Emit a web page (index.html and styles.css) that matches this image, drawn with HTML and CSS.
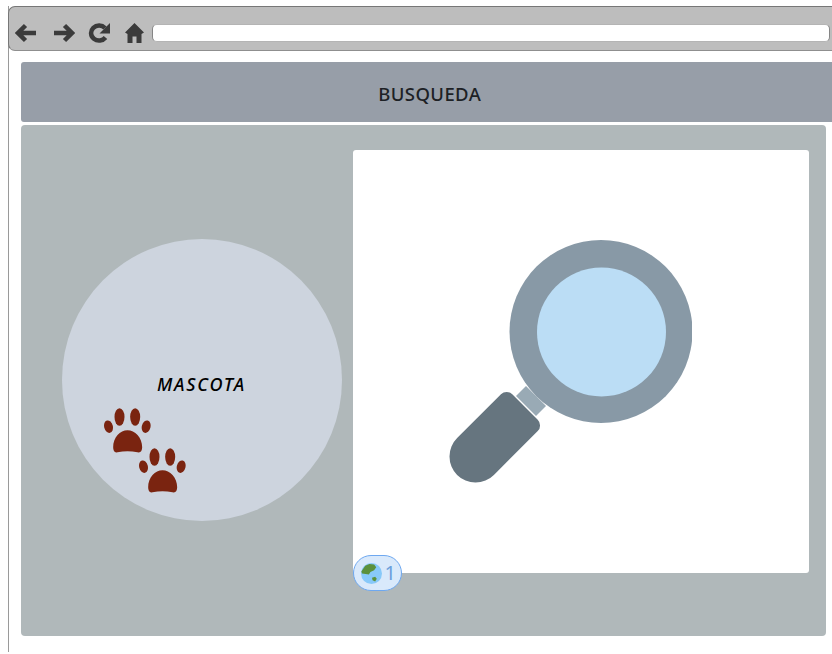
FILE: index.html
```html
<!DOCTYPE html>
<html lang="es">
<head>
<meta charset="utf-8">
<title>Busqueda</title>
<link rel="stylesheet" href="styles.css">
</head>
<body>
<svg class="defs" width="0" height="0" aria-hidden="true">
  <symbol id="paw" viewBox="0 0 140 135">
    <ellipse cx="46" cy="27" rx="15" ry="26"/>
    <ellipse cx="93" cy="27" rx="15" ry="26"/>
    <ellipse cx="13" cy="56" rx="13" ry="19" transform="rotate(-14 13 56)"/>
    <ellipse cx="126" cy="56" rx="13" ry="19" transform="rotate(14 126 56)"/>
    <path d="M27 118C27 88 48 67 70 67C92 67 114 88 114 118Q114 136 100 133Q70 127 40 133Q27 136 27 118Z"/>
  </symbol>
</svg>
<div class="window">
  <div class="toolbar">
    <div class="nav">
      <svg class="icon back" viewBox="0 0 21 20"><path d="M10.500 2.500 3 10 10.500 17.500M4 10H21"/></svg>
      <svg class="icon forward" viewBox="0 0 21 20"><path d="M10.500 2.500 18 10 10.500 17.500M17 10H0"/></svg>
      <svg class="icon reload" viewBox="0 0 24 20"><path class="arc" d="M18.500 14.500A8 7.500 0 1 1 18 5"/><path class="tip" d="M23 0V10.500H12.500Z"/></svg>
      <svg class="icon home" viewBox="0 0 19 20"><path class="tip" d="M9.500 0 19 9.500 16.500 11V20H11.500V13.500H7.500V20H2.500V11L0 9.500Z"/></svg>
    </div>
    <div class="address"></div>
  </div>
  <main class="page">
    <header class="banner">BUSQUEDA</header>
    <section class="panel">
      <div class="bubble">
        <span class="bubble-label">MASCOTA</span>
        <svg class="paw paw-one"><use href="#paw"/></svg>
        <svg class="paw paw-two"><use href="#paw"/></svg>
      </div>
      <div class="card">
        <svg class="magnifier" viewBox="449 240 243 243">
          <path fill="#99aab5" d="M526 386 546 406 536 416 516 396Z"/>
          <path fill="#66757f" transform="translate(525 407) rotate(45)" d="M-26 8a8 8 0 0 1 8-8h36a8 8 0 0 1 8 8v62a26 26 0 0 1-52 0Z"/>
          <circle cx="601" cy="331.500" r="91.500" fill="#8899a6"/>
          <circle cx="601.500" cy="332" r="64.500" fill="#bbddf5"/>
        </svg>
        <div class="badge">
          <svg class="globe" viewBox="0 0 20 20">
            <circle cx="10" cy="10" r="10" fill="#88c9f9"/>
            <path fill="#5c913b" d="M4 2.500 8 1 12.500 1.500 14.500 4 12.500 7 9 8.500 7.500 11 4.500 10.500 1 10 0.300 8Z"/>
            <path fill="#5c913b" d="M10.500 14 13.500 13 15 15 13.500 17.500 11 16.500Z"/>
          </svg>
          <span class="badge-count">1</span>
        </div>
      </div>
    </section>
  </main>
</div>
</body>
</html>
```
FILE: styles.css
```css
* {
  box-sizing: border-box;
}

html,
body {
  margin: 0;
  height: 100%;
  background: #fff;
  overflow: hidden;
}

.defs {
  position: absolute;
}

.window {
  display: flex;
  flex-direction: column;
  height: 646px;
  margin: 6px 0 0 8px;
  border-left: 1.500px solid #9a9a9a;
}

.toolbar {
  display: flex;
  align-items: center;
  flex: none;
  height: 45px;
  margin-left: -1.500px;
  padding: 8px 0 0 6px;
  background: #bdbdbd;
  border: 1px solid #777;
  border-width: 1.500px 0 1.500px 1px;
  border-bottom-color: #8f8f8f;
  border-radius: 7px 0 0 7px;
}

.nav {
  display: flex;
  align-items: center;
}

.icon {
  display: block;
  height: 20px;
  fill: none;
  stroke: #3b3b3b;
  stroke-width: 4.500;
}

.icon .tip {
  fill: #3b3b3b;
  stroke: none;
}

.back,
.forward {
  width: 21px;
}

.back {
  margin-right: 18px;
}

.forward {
  margin-right: 12px;
}

.reload {
  width: 24px;
  margin-right: 14px;
}

.home {
  width: 19px;
  margin-right: 8px;
}

.address {
  flex: 1;
  height: 18px;
  margin-right: 2px;
  background: #fff;
  border: 1px solid #b4b4b4;
  border-inline-color: #858585;
  border-radius: 5px;
}

.page {
  display: flex;
  flex-direction: column;
  flex: 1;
  padding: 11px 0 16px 11.500px;
}

.banner {
  display: flex;
  align-items: center;
  justify-content: center;
  flex: none;
  height: 60px;
  padding: 2px 0 0 7px;
  background: #979ea8;
  border-radius: 3px 0 0 3px;
  color: #1d2125;
  font: 500 18.500px "Noto Sans", sans-serif;
  letter-spacing: 0.400px;
}

.panel {
  display: flex;
  flex: 1;
  margin: 3px 6px 0 0;
  padding: 25px 17px 63px 41px;
  background: #b0b8ba;
  border-radius: 4px;
}

.bubble {
  position: relative;
  flex: none;
  display: flex;
  align-items: center;
  justify-content: center;
  width: 280px;
  height: 282px;
  margin-top: 89px;
  margin-right: 11px;
  background: #cdd4de;
  border-radius: 50%;
}

.bubble-label {
  margin-top: 7px;
  color: #000;
  font: italic 500 18px "Noto Sans", sans-serif;
  letter-spacing: 1.800px;
}

.paw {
  position: absolute;
  width: 47px;
  height: 45px;
  fill: #7a2410;
}

.paw-one {
  left: 42px;
  top: 169px;
}

.paw-two {
  left: 77px;
  top: 209px;
}

.card {
  position: relative;
  flex: 1;
  display: flex;
  align-items: center;
  justify-content: center;
  padding-right: 21px;
  background: #fff;
  border-radius: 3px;
}

.magnifier {
  display: block;
  width: 243px;
  height: 243px;
}

.badge {
  position: absolute;
  left: 0;
  top: 405px;
  display: flex;
  align-items: center;
  gap: 3px;
  width: 49px;
  height: 36px;
  padding-left: 7px;
  background: #d9e9fb;
  border: 1px solid #6ea8f0;
  border-radius: 18px;
}

.globe {
  display: block;
  width: 21px;
  height: 21px;
}

.badge-count {
  color: #6b9fdc;
  font: 20px "Noto Sans", sans-serif;
  line-height: 1;
}
```
